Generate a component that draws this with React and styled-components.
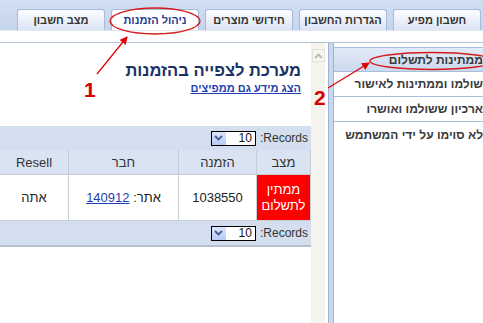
import React from 'react';
import styled, { createGlobalStyle } from 'styled-components';

const Global = createGlobalStyle`
  html, body {
    margin: 0;
    padding: 0;
    overflow: hidden;
    background: #fff;
  }
  body {
    font-family: "Liberation Sans", Arial, sans-serif;
  }
`;

const Page = styled.div`
  position: relative;
  direction: rtl;
  width: 483px;
  height: 323px;
  display: flex;
  flex-direction: column;
  overflow: hidden;
`;

const TabBar = styled.div`
  height: 30px;
  box-sizing: border-box;
  display: flex;
  align-items: flex-end;
  gap: 6px;
  padding-right: 2px;
  background: linear-gradient(#d2dff2, #c5d5ec);
`;

const Tab = styled.div`
  width: 88px;
  height: 21px;
  box-sizing: border-box;
  display: flex;
  align-items: center;
  justify-content: center;
  border: 1px solid #a6bbd9;
  border-bottom: none;
  border-radius: 3px 3px 0 0;
  background: ${p => (p.$active ? '#fff' : 'linear-gradient(#fcfdff, #dbe5f4)')};
  color: ${p => (p.$active ? '#1d3c8e' : '#333')};
  font-size: 11px;
  font-weight: bold;
  white-space: nowrap;
`;

const SubBar = styled.div`
  height: 11px;
  background: #fff;
  border-top: 1px solid #dfe7f3;
  border-bottom: 1px solid #b3c3dc;
`;

const Main = styled.div`
  flex: 1;
  display: grid;
  grid-template-columns: 149px 6px 17px 311px;
  min-height: 0;
`;

const SidePanel = styled.div`
  display: flex;
  flex-direction: column;
  overflow: hidden;
  padding-top: 4px;
`;

const SideItem = styled.div`
  height: 25px;
  box-sizing: border-box;
  display: flex;
  align-items: center;
  white-space: nowrap;
  font-size: 12px;
  font-weight: bold;
  color: #3a3a3a;
  border-bottom: ${p => (p.$last ? 'none' : '1px solid #a9bedc')};
  background: ${p => (p.$head ? 'linear-gradient(#e3ebf7, #cbd9ef)' : '#fff')};
  border-top: ${p => (p.$head ? '1px solid #a9bedc' : 'none')};
`;

const Divider = styled.div`
  background: #cad8ee;
  border-left: 1px solid #9fb3d5;
  border-right: 1px solid #9fb3d5;
  box-sizing: border-box;
`;

const ScrollTrack = styled.div`
  background: #f4f3ee;
  border-right: 3px solid #fff;
  display: flex;
  justify-content: center;
  padding-top: 6px;
`;

const ScrollButton = styled.div`
  width: 13px;
  height: 13px;
  box-sizing: border-box;
  border: 1px solid #e2e1da;
  background: #f7f6f2;
  display: flex;
  align-items: center;
  justify-content: center;
`;

const Content = styled.div`
  display: flex;
  flex-direction: column;
  padding-top: 16px;
`;

const Title = styled.h1`
  margin: 0 10px 0 0;
  font-size: 16.5px;
  line-height: 22px;
  font-weight: bold;
  color: #1b3264;
`;

const SubLink = styled.a`
  margin: 1px 10px 0 0;
  font-size: 11px;
  font-weight: bold;
  color: #1f3fb0;
  text-decoration: underline;
`;

const Toolbar = styled.div`
  height: ${p => (p.$bottom ? '26px' : '24px')};
  box-sizing: border-box;
  display: flex;
  align-items: center;
  gap: 4px;
  padding-right: 3px;
  background: #d3deef;
  border-bottom: ${p => (p.$bottom ? '2px solid #b8c0cf' : 'none')};
  margin-top: ${p => (p.$top ? '32px' : '0')};
  font-size: 12px;
  color: #333;
`;

const RecordsLabel = styled.span`
  direction: ltr;
  unicode-bidi: isolate;
`;

const Select = styled.div`
  width: 45px;
  height: 15px;
  box-sizing: border-box;
  border: 1px solid #000;
  background: #fff;
  display: flex;
  align-items: center;
  justify-content: space-between;
  font-size: 12px;
  color: #111;
  padding-right: 3px;
`;

const DropButton = styled.div`
  width: 14px;
  height: 13px;
  background: linear-gradient(#dbe6fd, #b7cbf5);
  display: flex;
  align-items: center;
  justify-content: center;
`;

const Table = styled.table`
  width: 311px;
  border-collapse: collapse;
  table-layout: fixed;
  font-size: 13px;
  color: #222;
`;

const Th = styled.th`
  height: 24px;
  padding: 0;
  font-weight: normal;
  background: #d9e3f2;
  color: #333;
  border: 1px solid #c4cbd6;
  border-top: none;
`;

const Td = styled.td`
  height: 45px;
  padding: 0;
  text-align: center;
  border: 1px solid #c8cdd6;
  background: ${p => (p.$status ? '#ff0000' : '#fff')};
  color: ${p => (p.$status ? '#fff' : '#222')};
  line-height: 16px;
`;

const CellLink = styled.a`
  color: #1f3fb0;
  text-decoration: underline;
`;

const Overlay = styled.svg`
  position: absolute;
  left: 0;
  top: 0;
  pointer-events: none;
`;

const Marker = styled.span`
  position: absolute;
  font-family: "Liberation Sans", Arial, sans-serif;
  font-size: 21px;
  font-weight: bold;
  color: #d80000;
  line-height: 1;
`;

const Chevron = ({ up, color }) => (
  <svg width="9" height="6" viewBox="0 0 9 6">
    <path d={up ? 'M1 5 L4.5 1.5 L8 5' : 'M1 1 L4.5 4.5 L8 1'} fill="none" stroke={color} strokeWidth="1.8" />
  </svg>
);

const RecordsBar = ({ bottom, top }) => (
  <Toolbar $bottom={bottom} $top={top}>
    <RecordsLabel>:Records</RecordsLabel>
    <Select>
      <span>10</span>
      <DropButton><Chevron color="#4a5f8a" /></DropButton>
    </Select>
  </Toolbar>
);

const tabs = ['חשבון מפיע', 'הגדרות החשבון', 'חידושי מוצרים', 'ניהול הזמנות', 'מצב חשבון'];
const sideItems = ['ממתינות לתשלום', 'שולמו וממתינות לאישור', 'ארכיון ששולמו ואושרו', 'לא סוימו על ידי המשתמש'];

export default function App() {
  return (
    <>
      <Global />
      <Page>
        <TabBar>
          {tabs.map(t => (
            <Tab key={t} $active={t === 'ניהול הזמנות'}>{t}</Tab>
          ))}
        </TabBar>
        <SubBar />
        <Main>
          <SidePanel>
            {sideItems.map((s, i) => (
              <SideItem key={s} $head={i === 0} $last={i === sideItems.length - 1}>{s}</SideItem>
            ))}
          </SidePanel>
          <Divider />
          <ScrollTrack>
            <ScrollButton><Chevron up color="#b9b8b0" /></ScrollButton>
          </ScrollTrack>
          <Content>
            <Title>מערכת לצפייה בהזמנות</Title>
            <SubLink href="#">הצג מידע גם ממפיצים</SubLink>
            <RecordsBar top />
            <Table>
              <colgroup>
                <col style={{ width: 54 }} />
                <col style={{ width: 78 }} />
                <col style={{ width: 110 }} />
                <col style={{ width: 69 }} />
              </colgroup>
              <thead>
                <tr>
                  <Th>מצב</Th>
                  <Th>הזמנה</Th>
                  <Th>חבר</Th>
                  <Th>Resell</Th>
                </tr>
              </thead>
              <tbody>
                <tr>
                  <Td $status>ממתין<br />לתשלום</Td>
                  <Td>1038550</Td>
                  <Td>אתר: <CellLink href="#">140912</CellLink></Td>
                  <Td>אתה</Td>
                </tr>
              </tbody>
            </Table>
            <RecordsBar bottom />
          </Content>
        </Main>
        <Overlay width="483" height="323" viewBox="0 0 483 323">
          <defs>
            <marker id="arrow" markerWidth="8" markerHeight="8" refX="7" refY="4" orient="auto" markerUnits="userSpaceOnUse">
              <path d="M0 0 L8 4 L0 8 Z" fill="#e00000" />
            </marker>
          </defs>
          <ellipse cx="155" cy="21" rx="45" ry="13" fill="none" stroke="#d41c1c" strokeWidth="1.4" />
          <line x1="97" y1="74" x2="127" y2="37" stroke="#e00000" strokeWidth="1.2" markerEnd="url(#arrow)" />
          <ellipse cx="432" cy="61" rx="62" ry="8.5" fill="none" stroke="#d41c1c" strokeWidth="1.4" />
          <line x1="328" y1="88" x2="369" y2="63" stroke="#e00000" strokeWidth="1.2" markerEnd="url(#arrow)" />
        </Overlay>
        <Marker style={{ left: 84, top: 79 }}>1</Marker>
        <Marker style={{ left: 314, top: 87 }}>2</Marker>
      </Page>
    </>
  );
}
